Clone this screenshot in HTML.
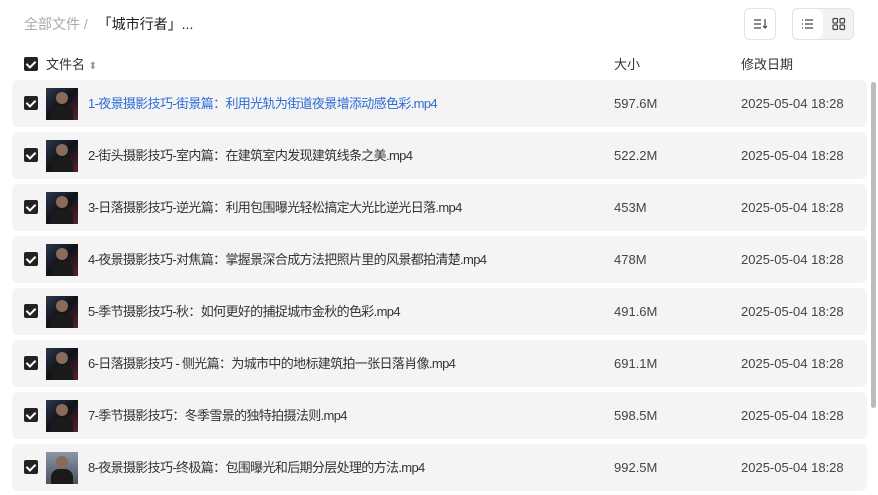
<!DOCTYPE html><html><head><meta charset="utf-8"><style>
*{margin:0;padding:0;box-sizing:border-box}
body{width:878px;height:495px;overflow:hidden;background:#fff;font-family:"Liberation Sans","Noto Sans CJK SC",sans-serif;position:relative;color:#333}
.bc{position:absolute;left:24px;top:14px;font-size:14px;line-height:20px;color:#aaa}
.bc b{font-weight:normal;color:#222;margin-left:6px}
.btn{position:absolute;top:8px;height:32px;border:1px solid #e3e3e3;border-radius:6px;background:#fff}
.cb{position:absolute;width:14px;height:14px;background:#222;border-radius:2px}
.cb:after{content:"";position:absolute;left:4px;top:2px;width:4px;height:7px;border:solid #fff;border-width:0 2px 2px 0;transform:rotate(45deg)}
.hd{position:absolute;top:56px;font-size:13px;line-height:18px;color:#333}
.row{position:absolute;left:12px;width:855px;height:47px;background:#f4f4f4;border-radius:6px}
.row .cb{left:12px;top:16px}
.th{position:absolute;left:34px;top:8px;width:32px;height:32px;background:linear-gradient(135deg,#2a3850,#101218 50%,#5a2030);overflow:hidden}
.th:after{content:"";position:absolute;left:10px;top:4px;width:12px;height:12px;border-radius:50%;background:#8a6a5a}
.th:before{content:"";position:absolute;left:5px;top:17px;width:22px;height:15px;border-radius:8px 8px 0 0;background:#1a1a1a}
.nm{position:absolute;left:76px;top:15px;font-size:13px;line-height:18px;color:#333;white-space:nowrap;letter-spacing:-0.65px}
.sz{position:absolute;left:602px;top:15px;font-size:13px;line-height:18px;color:#444}
.dt{position:absolute;left:729px;top:15px;font-size:13px;line-height:18px;color:#444}
.sb{position:absolute;left:871px;top:82px;width:5px;height:326px;background:#bbb;border-radius:3px}
</style></head><body>
<div class="bc">全部文件 / <b>「城市行者」...</b></div>
<div class="btn" style="left:744px;width:32px"><svg width="30" height="30" viewBox="0 0 30 30"><path d="M9 11h7M9 15h7M9 19h7M20 10v9M18 17l2 2 2-2" stroke="#444" stroke-width="1.2" fill="none"/></svg></div>
<div class="btn" style="left:792px;width:62px;background:#f2f2f2;overflow:hidden"><div style="position:absolute;left:0;top:0;width:30px;height:30px;background:#fff;border-radius:6px"><svg width="30" height="30" viewBox="0 0 30 30"><path d="M9 11h1M9 15h1M9 19h1M12 11h8M12 15h8M12 19h8" stroke="#444" stroke-width="1.3" fill="none"/></svg></div><svg style="position:absolute;left:31px;top:0" width="30" height="30" viewBox="0 0 30 30"><rect x="9" y="9.5" width="4.5" height="4.5" rx="1" stroke="#444" fill="none" stroke-width="1.2"/><rect x="16" y="9.5" width="4.5" height="4.5" rx="1" stroke="#444" fill="none" stroke-width="1.2"/><rect x="9" y="16" width="4.5" height="4.5" rx="1" stroke="#444" fill="none" stroke-width="1.2"/><rect x="16" y="16" width="4.5" height="4.5" rx="1" stroke="#444" fill="none" stroke-width="1.2"/></svg></div>
<div class="cb" style="left:24px;top:57px"></div>
<div class="hd" style="left:46px">文件名 <span style="color:#999;font-size:10px">⬍</span></div>
<div class="hd" style="left:614px">大小</div>
<div class="hd" style="left:741px">修改日期</div>

<div class="row" style="top:80px"><div class="cb"></div><div class="th"></div><div class="nm" style="color:#2d6bd8">1-夜景摄影技巧-街景篇：利用光轨为街道夜景增添动感色彩.mp4</div><div class="sz">597.6M</div><div class="dt">2025-05-04 18:28</div></div>
<div class="row" style="top:132px"><div class="cb"></div><div class="th"></div><div class="nm">2-街头摄影技巧-室内篇：在建筑室内发现建筑线条之美.mp4</div><div class="sz">522.2M</div><div class="dt">2025-05-04 18:28</div></div>
<div class="row" style="top:184px"><div class="cb"></div><div class="th"></div><div class="nm">3-日落摄影技巧-逆光篇：利用包围曝光轻松搞定大光比逆光日落.mp4</div><div class="sz">453M</div><div class="dt">2025-05-04 18:28</div></div>
<div class="row" style="top:236px"><div class="cb"></div><div class="th"></div><div class="nm">4-夜景摄影技巧-对焦篇：掌握景深合成方法把照片里的风景都拍清楚.mp4</div><div class="sz">478M</div><div class="dt">2025-05-04 18:28</div></div>
<div class="row" style="top:288px"><div class="cb"></div><div class="th"></div><div class="nm">5-季节摄影技巧-秋：如何更好的捕捉城市金秋的色彩.mp4</div><div class="sz">491.6M</div><div class="dt">2025-05-04 18:28</div></div>
<div class="row" style="top:340px"><div class="cb"></div><div class="th"></div><div class="nm">6-日落摄影技巧 - 侧光篇：为城市中的地标建筑拍一张日落肖像.mp4</div><div class="sz">691.1M</div><div class="dt">2025-05-04 18:28</div></div>
<div class="row" style="top:392px"><div class="cb"></div><div class="th"></div><div class="nm">7-季节摄影技巧：冬季雪景的独特拍摄法则.mp4</div><div class="sz">598.5M</div><div class="dt">2025-05-04 18:28</div></div>
<div class="row" style="top:444px"><div class="cb"></div><div class="th" style="background:linear-gradient(180deg,#8a96a8,#4a5060)"></div><div class="nm">8-夜景摄影技巧-终极篇：包围曝光和后期分层处理的方法.mp4</div><div class="sz">992.5M</div><div class="dt">2025-05-04 18:28</div></div>
<div class="sb"></div>
</body></html>
